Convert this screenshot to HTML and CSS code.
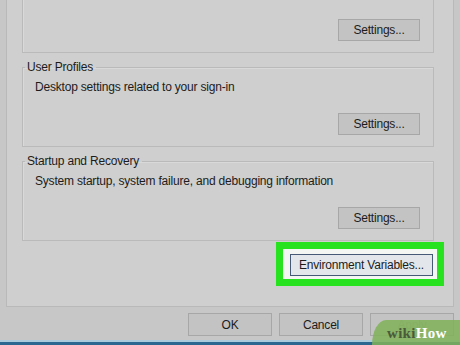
FILE: index.html
```html
<!DOCTYPE html>
<html lang="en">
<head>
    <meta charset="UTF-8">
    <meta name="viewport" content="width=device-width, initial-scale=1.0">
    <title>System Properties</title>
    <link rel="stylesheet" href="styles.css">
</head>
<body>
    <div class="panel">
        <fieldset class="group">
            <legend>Performance</legend>
            <p class="desc">Visual effects, processor scheduling, memory usage, and virtual memory</p>
            <div class="group-actions">
                <button class="btn">Settings...</button>
            </div>
        </fieldset>
        <fieldset class="group">
            <legend>User Profiles</legend>
            <p class="desc">Desktop settings related to your sign-in</p>
            <div class="group-actions">
                <button class="btn">Settings...</button>
            </div>
        </fieldset>
        <fieldset class="group">
            <legend>Startup and Recovery</legend>
            <p class="desc">System startup, system failure, and debugging information</p>
            <div class="group-actions">
                <button class="btn">Settings...</button>
            </div>
        </fieldset>
        <div class="env-row">
            <div class="highlight">
                <button class="btn btn-env">Environment Variables...</button>
            </div>
        </div>
    </div>
    <div class="dialog-buttons">
        <button class="btn btn-dialog">OK</button>
        <button class="btn btn-dialog">Cancel</button>
        <button class="btn btn-dialog" disabled>Apply</button>
    </div>
    <div class="taskbar"></div>
    <div class="watermark"><span class="wm-wiki">wiki</span><span class="wm-how">How</span></div>
</body>
</html>
```

FILE: styles.css
```css
* {
    margin: 0;
    padding: 0;
    box-sizing: border-box;
    font-family: 'Liberation Sans', Arial, sans-serif;
}

body {
    width: 460px;
    height: 345px;
    overflow: hidden;
    background-color: #c7c7c7;
    color: #1c1c1c;
    font-size: 12px;
    letter-spacing: -0.2px;
    position: relative;
}

.panel {
    margin-left: 6px;
    width: 448px;
    background-color: #cfcfcf;
    border: 1px solid #b9b9b9;
    border-top: none;
    padding: 0 9px 20px 15px;
    display: flex;
    flex-direction: column;
    gap: 7px;
}

.group {
    margin-right: 10px;
    border: 1px solid #bababa;
    box-shadow: inset 1px 1px 0 #d9d9d9;
    padding: 6px 13px 11px 12px;
}

.group:first-child {
    margin-top: -34px;
}

legend {
    margin-left: -10px;
    padding: 0 3px 0 2px;
    line-height: 14px;
    font-size: 12px;
}

.desc {
    line-height: 14px;
    margin-bottom: 19px;
}

.group-actions {
    display: flex;
    justify-content: flex-end;
}

.btn {
    width: 82px;
    height: 22px;
    background-color: #c3c3c3;
    border: 1px solid #a7a7a7;
    color: #1c1c1c;
    font-size: 12px;
    letter-spacing: -0.2px;
}

.env-row {
    display: flex;
    justify-content: flex-end;
    margin-top: -6px;
}

.highlight {
    border: 7px solid #26e21f;
    background-color: #f4f6f4;
    padding: 5px 4px 3px 7px;
}

.btn-env {
    width: 143px;
    background-color: #e3e7ec;
    border: 1px solid #465a78;
}

.dialog-buttons {
    display: flex;
    justify-content: flex-end;
    gap: 7px;
    padding: 6px 6px 0 0;
}

.btn-dialog {
    width: 84px;
    height: 23px;
}

.btn-dialog:disabled {
    color: #a3a3a3;
}

.taskbar {
    margin-top: 4px;
    height: 5px;
    background-color: #2a6891;
    border-top: 2px solid #a9cbdc;
}

.watermark {
    position: absolute;
    right: 0;
    bottom: 0;
    width: 88px;
    height: 25px;
    padding: 5px 0 0 15px;
    background-color: rgba(128, 178, 88, 0.85);
    border-top-left-radius: 14px 25px;
    font-family: 'Liberation Serif', 'DejaVu Serif', serif;
    font-weight: bold;
    font-size: 15px;
    letter-spacing: 0.3px;
    line-height: 16px;
}

.wm-wiki {
    font-family: inherit;
    color: #4a5a3a;
}

.wm-how {
    font-family: inherit;
    color: #ffffff;
}
```
